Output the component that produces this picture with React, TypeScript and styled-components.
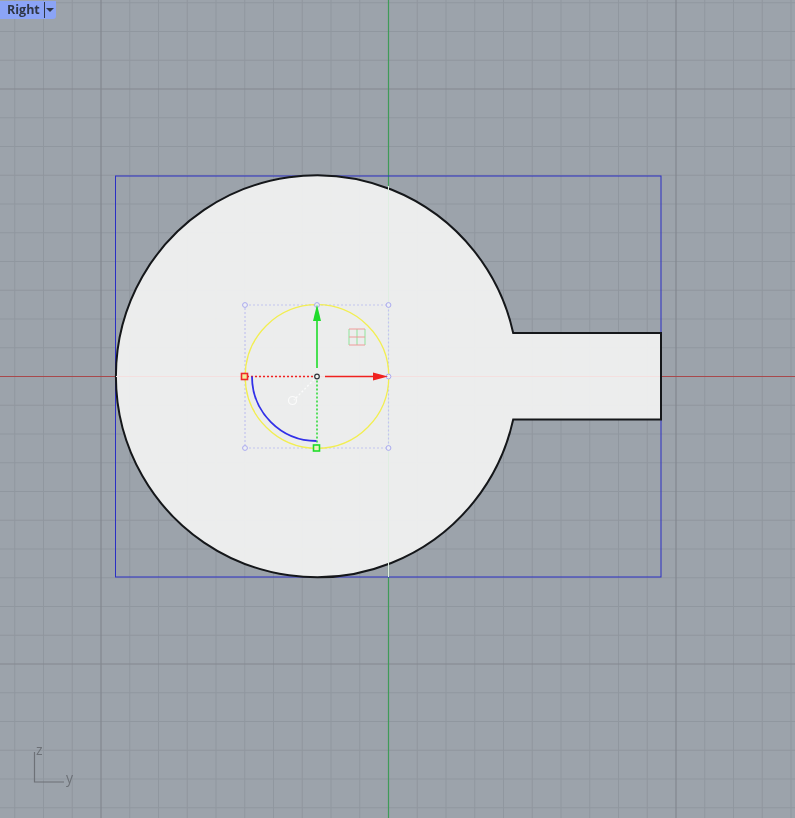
import styled, { createGlobalStyle } from 'styled-components';

const GlobalStyle = createGlobalStyle`
	html, body {
		margin: 0;
		padding: 0;
		background-color: #9ca3ab;
	}
`

const Viewport = styled.div`
	position: relative;
	width: 795px;
	height: 818px;
	overflow: hidden;
	background-color: #9ca3ab;
	font-family: "Open Sans", "Liberation Sans", sans-serif;
`

const Canvas = styled.svg`
	display: block;
	filter: blur(0.35px);
`

const ViewTab = styled.div`
	position: absolute;
	top: 1px;
	left: 0;
	height: 18px;
	display: flex;
	align-items: center;
	padding-left: 7px;
	background-color: #8ba4f6;
	border-bottom-right-radius: 3px;
	color: #2f3644;
	filter: blur(0.3px);
`

const TabLabel = styled.span`
	font-size: 12.5px;
	font-weight: 700;
	line-height: 18px;
	width: 37px;
`

const TabArrow = styled.span`
	width: 10px;
	height: 16px;
	border-left: 1px solid #2f3644;
	display: flex;
	align-items: center;
	justify-content: center;
	padding-right: 1px;

	&::after {
		content: "";
		border-left: 4px solid transparent;
		border-right: 4px solid transparent;
		border-top: 4px solid #2f3644;
	}
`

const AxisText = styled.text`
	font-family: "Open Sans", "Liberation Sans", sans-serif;
	font-size: 14px;
	fill: #6d7177;
`

const MINOR = 28.75
const ORIGIN_X = 388.5
const ORIGIN_Y = 376.5
const CX = 317
const CY = 376.5
const R = 201

// grid lines either side of the origin, every 10th one is a major line
const range = (origin: number, max: number) => {
	const out: { pos: number; major: boolean }[] = []
	for (let k = -20; k <= 20; k++) {
		const pos = origin + k * MINOR
		if (pos >= 0 && pos <= max && k !== 0) out.push({ pos, major: k % 10 === 0 })
	}
	return out
}

const xLines = range(ORIGIN_X, 795)
const yLines = range(ORIGIN_Y, 818)

const outline = `M 513.2 333 L 661 333 L 661 419.5 L 513.2 419.5 A ${R} ${R} 0 1 1 513.2 333 Z`

function Grid() {
	return (
		<g>
			{xLines.filter(l => !l.major).map(l => <line key={l.pos} x1={l.pos} x2={l.pos} y1={0} y2={818} stroke="#90979f" strokeWidth={1} />)}
			{yLines.filter(l => !l.major).map(l => <line key={l.pos} x1={0} x2={795} y1={l.pos} y2={l.pos} stroke="#90979f" strokeWidth={1} />)}
			{xLines.filter(l => l.major).map(l => <line key={l.pos} x1={l.pos} x2={l.pos} y1={0} y2={818} stroke="#83878f" strokeWidth={1.2} />)}
			{yLines.filter(l => l.major).map(l => <line key={l.pos} x1={0} x2={795} y1={l.pos} y2={l.pos} stroke="#83878f" strokeWidth={1.2} />)}
			<line x1={ORIGIN_X} x2={ORIGIN_X} y1={0} y2={818} stroke="#3f9a58" strokeWidth={1.2} />
			<line x1={0} x2={795} y1={ORIGIN_Y} y2={ORIGIN_Y} stroke="#a8494c" strokeWidth={1.2} />
		</g>
	)
}

function Part() {
	return (
		<g>
			<rect x={115.5} y={176} width={545.5} height={401} fill="none" stroke="#2b2fc4" strokeWidth={1} />
			<path d={outline} fill="#eeefee" fillOpacity={0.97} stroke="#15171a" strokeWidth={2} strokeLinejoin="miter" />
			<line x1={ORIGIN_X} x2={ORIGIN_X} y1={186} y2={577} stroke="#dfeee2" strokeWidth={1} />
			<line x1={116} x2={660} y1={ORIGIN_Y} y2={ORIGIN_Y} stroke="#f4dfdf" strokeWidth={1} />
		</g>
	)
}

const handles = [
	[245, 305], [317, 305], [388.5, 305], [388.5, 376.5], [245, 448], [388.5, 448],
]

function Gizmo() {
	return (
		<g>
			<rect x={245} y={305} width={143.5} height={143} fill="none" stroke="#c2c3ef" strokeWidth={1.2} strokeDasharray="2 2" />
			<circle cx={CX} cy={CY} r={71.8} fill="none" stroke="#f2ee52" strokeWidth={1.3} />
			{handles.map(([x, y]) => (
				<circle key={`${x}-${y}`} cx={x} cy={y} r={2.4} fill="#eef0f4" stroke="#a9a9ee" strokeWidth={1} />
			))}

			<line x1={CX} x2={CX} y1={368} y2={318} stroke="#1fdc2b" strokeWidth={1.6} />
			<polygon points="317,304.5 321,321 313,321" fill="#1fdc2b" />
			<line x1={325} x2={375} y1={CY} y2={CY} stroke="#f0211f" strokeWidth={1.6} />
			<polygon points="388,376.5 373,372.5 373,380.5" fill="#f0211f" />

			<line x1={CX} x2={248} y1={CY} y2={CY} stroke="#ee2222" strokeWidth={1.4} strokeDasharray="2 2" />
			<line x1={CX} x2={CX} y1={CY} y2={445} stroke="#17d923" strokeWidth={1.4} strokeDasharray="2 2" />
			<line x1={CX} x2={294} y1={CY} y2={400} stroke="#fbfbfb" strokeWidth={1.3} strokeDasharray="2 2" />
			<circle cx={292.5} cy={400.5} r={4} fill="none" stroke="#fbfbfb" strokeWidth={1.2} />

			<path d="M 252 376.5 A 64.5 64.5 0 0 0 316.5 441" fill="none" stroke="#3230e8" strokeWidth={1.8} />

			<rect x={241.5} y={373.5} width={6} height={6} fill="#f2ee9a" stroke="#ee2a2a" strokeWidth={1.6} />
			<rect x={313.5} y={445} width={6} height={6} fill="#eef3c0" stroke="#1fdc2b" strokeWidth={1.6} />
			<circle cx={CX} cy={CY} r={2.3} fill="#f1f1f1" stroke="#30343a" strokeWidth={1.2} />

			{/* little plane grid */}
			<g fill="none" strokeWidth={1}>
				<line x1={349} x2={349} y1={329} y2={345} stroke="#8fe39a" />
				<line x1={357} x2={357} y1={329} y2={345} stroke="#8fe39a" />
				<line x1={365} x2={365} y1={329} y2={345} stroke="#8fe39a" />
				<line x1={349} x2={365} y1={329} y2={329} stroke="#ee9a9a" />
				<line x1={349} x2={365} y1={337} y2={337} stroke="#ee9a9a" />
				<line x1={349} x2={365} y1={345} y2={345} stroke="#ee9a9a" />
			</g>
		</g>
	)
}

function AxisMark() {
	return (
		<g>
			<path d="M 34.5 752 L 34.5 782 L 64 782" fill="none" stroke="#6d7177" strokeWidth={1.2} />
			<AxisText x={36} y={755}>z</AxisText>
			<AxisText x={66} y={783}>y</AxisText>
		</g>
	)
}

function App() {
	return (
		<Viewport>
			<GlobalStyle />
			<Canvas width={795} height={818} viewBox="0 0 795 818">
				<Grid />
				<Part />
				<Gizmo />
				<AxisMark />
			</Canvas>
			<ViewTab>
				<TabLabel>Right</TabLabel>
				<TabArrow />
			</ViewTab>
		</Viewport>
	)
}

export default App;
